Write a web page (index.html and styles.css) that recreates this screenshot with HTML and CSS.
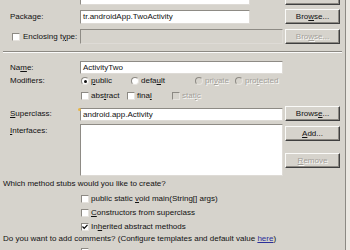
FILE: index.html
```html
<!DOCTYPE html>
<html>
<head>
<meta charset="utf-8">
<link rel="stylesheet" href="styles.css">
</head>
<body>
<div class="dlg">
  <div class="row r0">
    <span class="lab"></span>
    <span class="field short"></span>
    <span class="btn"></span>
  </div>
  <div class="row r-pkg">
    <span class="lab">Package:</span>
    <span class="field short">tr.androidApp.TwoActivity</span>
    <span class="btn"><span>Bro<u>w</u>se...</span></span>
  </div>
  <div class="row r-enc">
    <span class="lab lab-cb"><span class="cb"></span><span>Enclosing t<u>y</u>pe:</span></span>
    <span class="field disabled"></span>
    <span class="btn dis"><span>Bro<u>w</u>se...</span></span>
  </div>
  <div class="sep"></div>
  <div class="row r-name">
    <span class="lab">Na<u>m</u>e:</span>
    <span class="field">ActivityTwo</span>
  </div>
  <div class="row r-mod">
    <span class="lab">Modifiers:</span>
    <span class="opt w50"><span class="rb on"></span><span><u>p</u>ublic</span></span>
    <span class="opt w64"><span class="rb"></span><span>defa<u>u</u>lt</span></span>
    <span class="opt w40 dis"><span class="rb dis-box"></span><span>pri<u>v</u>ate</span></span>
    <span class="opt dis"><span class="rb dis-box"></span><span>pro<u>t</u>ected</span></span>
  </div>
  <div class="row r-mod2">
    <span class="lab"></span>
    <span class="opt w46"><span class="cb"></span><span>abs<u>t</u>ract</span></span>
    <span class="opt w45"><span class="cb"></span><span>fina<u>l</u></span></span>
    <span class="opt dis"><span class="cb dis-box"></span><span>stat<u>i</u>c</span></span>
  </div>
  <div class="row r-sup">
    <span class="lab"><u>S</u>uperclass:</span>
    <span class="field">android.app.Activity</span>
    <span class="btn"><span>Brows<u>e</u>...</span></span>
    <span class="bulb"></span>
  </div>
  <div class="row r-int">
    <span class="lab lab-top"><u>I</u>nterfaces:</span>
    <span class="list"></span>
    <span class="btncol">
      <span class="btn"><span><u>A</u>dd...</span></span>
      <span class="btn dis"><span><u>R</u>emove</span></span>
    </span>
  </div>
  <div class="line q1">Which method stubs would you like to create?</div>
  <div class="stub"><span class="cb"></span><span>public static <u>v</u>oid main(String[] args)</span></div>
  <div class="stub"><span class="cb"></span><span><u>C</u>onstructors from superclass</span></div>
  <div class="stub"><span class="cb checked"><svg width="6" height="6" viewBox="0 0 6 6"><path d="M0.5 2.5 L2.2 4.3 L5.5 0.8" fill="none" stroke="#000" stroke-width="1.2"/></svg></span><span>In<u>h</u>erited abstract methods</span></div>
  <div class="line q2">Do you want to add comments? (Configure templates and default value <a class="link">here</a>)</div>
  <div class="stub last"><span class="cb"></span></div>
</div>
</body>
</html>
```
FILE: styles.css
```css
html, body {
  margin: 0;
  padding: 0;
}
body {
  background: #ebe8e2;
  font-family: "Liberation Sans", Arial, sans-serif;
  font-size: 8px;
  color: #111;
}
.dlg {
  position: relative;
  width: 346px;
  height: 250px;
  box-sizing: border-box;
  padding-left: 3px;
  background: #d6d3cc;
  border-right: 1px solid #8c8983;
  overflow: hidden;
}
u {
  text-decoration: underline;
  text-underline-offset: 1px;
}
.row {
  display: flex;
  align-items: center;
  position: relative;
}
.lab {
  width: 77px;
  flex: none;
  box-sizing: border-box;
  padding-left: 7px;
  line-height: 10px;
}
.lab-cb {
  padding-left: 9px;
  display: flex;
  align-items: center;
}
.lab-cb .cb {
  margin-right: 3px;
}
.lab-top {
  margin-top: 2px;
}
.field {
  flex: none;
  width: 203px;
  height: 13px;
  box-sizing: border-box;
  background: #fff;
  border: 1px solid;
  border-color: #8e8b85 #dedbd6 #dedbd6 #8e8b85;
  padding-left: 2px;
  display: flex;
  align-items: center;
  line-height: 10px;
}
.field.short {
  width: 170px;
  margin-right: 33px;
}
.field.disabled {
  background: #d6d3cc;
}
.btn {
  flex: none;
  width: 55px;
  height: 15px;
  margin-left: 2px;
  box-sizing: border-box;
  background: #d6d3cc;
  border: 1px solid;
  border-color: #fafaf8 #3f3f3f #3f3f3f #fafaf8;
  box-shadow: inset -1px -1px 0 #8c8983;
  display: flex;
  align-items: center;
  justify-content: center;
  line-height: 10px;
}
.dis {
  color: #a3a09a;
  text-shadow: 1px 1px 0 #fbfbfa;
}
.r0 {
  margin-top: -11px;
}
.r0 .field {
  margin-top: 3px;
}
.r-pkg {
  margin-top: 4px;
}
.r-pkg .field {
  margin-top: 1px;
  height: 14px;
}
.r-enc {
  margin-top: 5px;
}
.r-enc .field {
  height: 15px;
}
.sep {
  margin-top: 7px;
  height: 1px;
  background: #8c8983;
  border-bottom: 1px solid #fbfbfa;
  margin-right: 3px;
}
.r-name {
  margin-top: 8px;
}
.r-mod {
  margin-top: 1px;
  height: 12px;
}
.r-mod2 {
  margin-top: 3px;
  height: 12px;
}
.r-sup {
  margin-top: 4px;
}
.r-sup .field {
  margin-top: 2px;
}
.r-int {
  margin-top: 3px;
  align-items: flex-start;
}
.opt {
  flex: none;
  display: flex;
  align-items: center;
  line-height: 10px;
}
.opt .cb, .opt .rb {
  margin-left: 1px;
  margin-right: 2px;
}
.w40 { width: 40px; }
.w45 { width: 45px; }
.w46 { width: 46px; }
.w50 { width: 50px; }
.w64 { width: 64px; }
.cb {
  flex: none;
  width: 8px;
  height: 8px;
  box-sizing: border-box;
  background: #fff;
  border: 1px solid;
  border-color: #8c8983 #e6e3de #e6e3de #8c8983;
  display: inline-flex;
  align-items: center;
  justify-content: center;
}
.rb {
  flex: none;
  width: 8px;
  height: 8px;
  box-sizing: border-box;
  border-radius: 50%;
  background: #fff;
  border: 1px solid;
  border-color: #8c8983 #e6e3de #e6e3de #8c8983;
  display: inline-flex;
  align-items: center;
  justify-content: center;
}
.rb.on::after {
  content: "";
  width: 3px;
  height: 3px;
  border-radius: 50%;
  background: #111;
}
.dis-box {
  background: #d6d3cc;
}
.bulb {
  position: absolute;
  left: 75px;
  top: 2px;
  width: 3px;
  height: 3px;
  border-radius: 50%;
  background: #e8b648;
}
.list {
  flex: none;
  width: 203px;
  height: 52px;
  box-sizing: border-box;
  background: #fff;
  border: 1px solid;
  border-color: #8e8b85 #dedbd6 #dedbd6 #8e8b85;
}
.btncol {
  display: flex;
  flex-direction: column;
  gap: 12px;
  padding-top: 2px;
}
.line {
  line-height: 10px;
  white-space: nowrap;
}
.q1 {
  margin-top: 3px;
}
.q1 + .stub {
  margin-top: 3px;
}
.stub {
  height: 14px;
  padding-left: 78px;
  display: flex;
  align-items: center;
  white-space: nowrap;
  line-height: 10px;
}
.stub .cb {
  margin-right: 2px;
}
.q2 {
  height: 10px;
}
.last {
  margin-top: 1px;
}
.link {
  color: #2b2f9a;
  text-decoration: underline;
}
```
